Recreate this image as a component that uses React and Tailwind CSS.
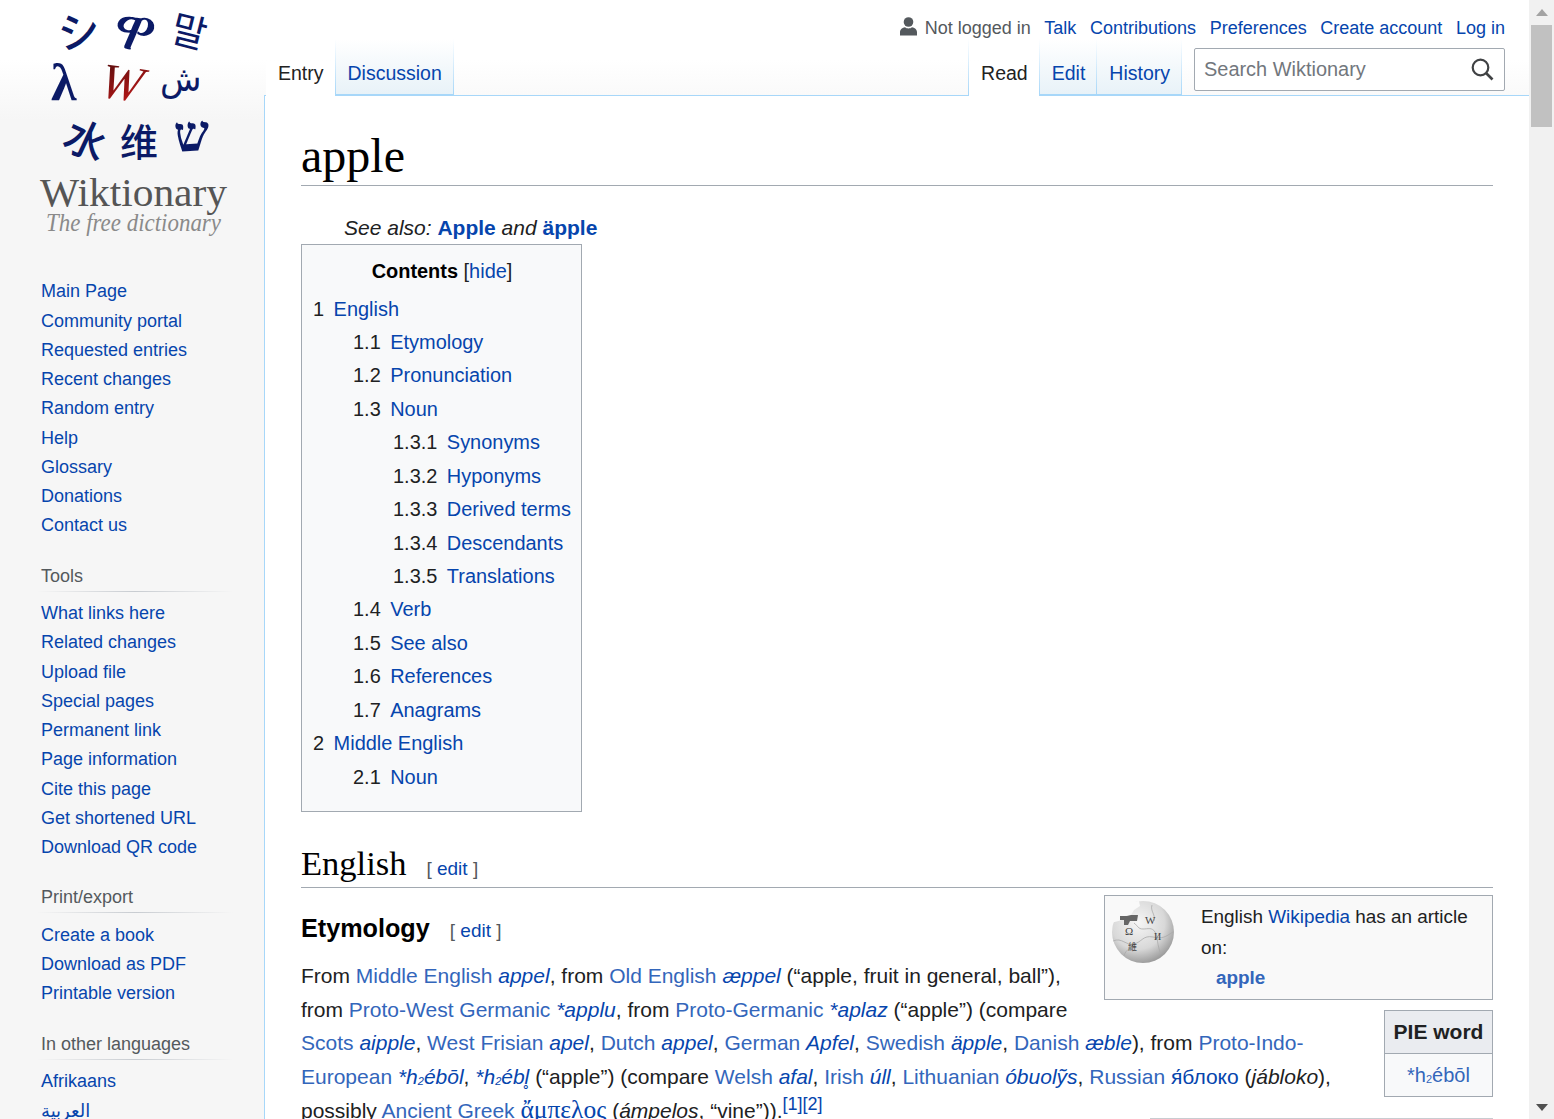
import React from "react";

const Portal = ({ items }) => (
  <ul>
    {items.map((t) => (
      <li key={t} className="h-[29.25px] leading-[29.25px] text-[18px] text-[#0645ad] whitespace-nowrap">{t}</li>
    ))}
  </ul>
);

const PortalHead = ({ children }) => (
  <div className="pt-[22px]">
    <div className="h-[26px] leading-[26px] text-[18px] text-[#54595d]">{children}</div>
    <div className="mt-[2px] mb-[7.5px] h-[1px] w-[196px] -ml-[4px] bg-gradient-to-r from-transparent via-[#c8ccd1] to-transparent" />
  </div>
);

const Logo = () => (
  <svg width="264" height="277.4" viewBox="0 0 264 277.4" className="block">
    <defs>
      <linearGradient id="w" x1="0" y1="0" x2="0.6" y2="1">
        <stop offset="0" stopColor="#4a0d0d" />
        <stop offset="1" stopColor="#c01818" />
      </linearGradient>
    </defs>
    <g fontFamily="'Noto Sans CJK JP','Noto Sans',sans-serif" fill="#0b1a66" fontWeight="700">
      <text x="58" y="47" fontSize="42" fontWeight="500" transform="rotate(-8 78 32)">シ</text>
      <text x="113" y="50" fontSize="62" fontFamily="'Noto Sans','DejaVu Sans',sans-serif" fontWeight="400" transform="rotate(15 135 30)">ዋ</text>
      <text x="172" y="46" fontSize="38" fontWeight="400" fontFamily="'Noto Sans CJK KR',sans-serif" transform="rotate(14 192 30)">말</text>
      <text x="51" y="100" fontSize="52" fontFamily="'Liberation Serif',serif" fontWeight="700">λ</text>
      <text x="160" y="91" fontSize="34" fontFamily="'DejaVu Sans',sans-serif" fontWeight="400">ش</text>
      <text x="67" y="155" fontSize="42" fontFamily="'Noto Sans CJK SC',sans-serif" fontWeight="500" transform="rotate(25 85 135)">水</text>
      <text x="120" y="156" fontSize="38" fontFamily="'Noto Sans CJK SC',sans-serif" fontWeight="500">维</text>
      <text x="174" y="151" fontSize="50" fontFamily="'Liberation Serif',serif" fontWeight="700" transform="rotate(-4 190 135)">ש</text>
    </g>
    <text x="107" y="100" fontSize="50" fontFamily="'Liberation Serif',serif" fontStyle="italic" fill="url(#w)" transform="rotate(8 125 82) skewX(-4)">W</text>
    <text x="133.5" y="206.5" textAnchor="middle" fontSize="40" fontFamily="'Liberation Serif',serif" fill="#555" textLength="187" lengthAdjust="spacingAndGlyphs">Wiktionary</text>
    <text x="133.5" y="231" textAnchor="middle" fontSize="26" fontFamily="'Liberation Serif',serif" fontStyle="italic" fill="#8a8a8a" textLength="175" lengthAdjust="spacingAndGlyphs">The free dictionary</text>
  </svg>
);

const Globe = () => (
  <svg width="66" height="62" viewBox="0 0 66 62" className="block -ml-[1px]">
    <defs>
      <radialGradient id="g" cx="42%" cy="35%" r="72%">
        <stop offset="0" stopColor="#f6f6f6" />
        <stop offset="0.6" stopColor="#d8d8d8" />
        <stop offset="1" stopColor="#8c8c8c" />
      </radialGradient>
    </defs>
    <circle cx="33" cy="31" r="31" fill="url(#g)" />
    <path d="M1 22L8 9l12-8 9-1 1 5-6 4-3 5-6 1-3 4z" fill="#f9f9f9" />
    <path d="M10 15h7l4-1h7l-1 6h-7l-2 4h-4v-5h-4z" fill="#666" />
    <g fill="none" stroke="#aaa" strokeWidth="0.8">
      <path d="M24 22c4 3 4 6 9 6s9-2 12 3 2 14 6 22" />
      <path d="M3 40c9-4 13 5 21 3s9-9 19-7 12 0 20-5" />
      <path d="M14 55c2-8 9-8 11-13M42 4c-2 6 4 10 2 16" />
    </g>
    <g fill="#444" fontFamily="'Liberation Serif',serif">
      <text x="15" y="34" fontSize="11">Ω</text>
      <text x="35" y="23" fontSize="11">W</text>
      <text x="44" y="39" fontSize="10">И</text>
      <text x="18" y="49" fontSize="9" fontFamily="'Noto Sans CJK SC',sans-serif">維</text>
    </g>
  </svg>
);

const Sep = () => <div className="w-[1px] h-[56px] bg-gradient-to-b from-transparent to-[#a7d7f9]" />;

const Tab = ({ children, active }) => (
  <div
    className={`pl-[12px] pr-[11px] pt-[17px] text-[19.5px] leading-[34px] whitespace-nowrap ${
      active
        ? "h-[57px] -mb-[1px] bg-gradient-to-b from-transparent from-[0%] to-white to-[40%] text-[#222]"
        : "h-[56px] bg-gradient-to-b from-white to-[#e8f2f8] text-[#0645ad] border-b border-b-[#a7d7f9]"
    }`}
  >
    {children}
  </div>
);

const tocRows = [
  [0, "1", "English"],
  [1, "1.1", "Etymology"],
  [1, "1.2", "Pronunciation"],
  [1, "1.3", "Noun"],
  [2, "1.3.1", "Synonyms"],
  [2, "1.3.2", "Hyponyms"],
  [2, "1.3.3", "Derived terms"],
  [2, "1.3.4", "Descendants"],
  [2, "1.3.5", "Translations"],
  [1, "1.4", "Verb"],
  [1, "1.5", "See also"],
  [1, "1.6", "References"],
  [1, "1.7", "Anagrams"],
  [0, "2", "Middle English"],
  [1, "2.1", "Noun"],
];
const indent = ["pl-0", "pl-[40px]", "pl-[80px]"];

const L = ({ children }) => <span className="text-[#3366bb]">{children}</span>;
const I = ({ children }) => <i className="text-[#0645ad]">{children}</i>;
const Sub2 = () => <span className="text-[11px] align-[-1px] leading-none">2</span>;

export default function App() {
  return (
    <div className="flex h-[1119px] w-[1554px] overflow-hidden font-['Liberation_Sans',Arial,sans-serif] text-[#202122] bg-[#f6f6f6]">
      <div className="relative flex flex-1 min-w-0 bg-gradient-to-b from-white from-[60px] to-[#f6f6f6] to-[120px] bg-no-repeat [background-size:100%_120px]">
        <aside className="w-[264px] shrink-0">
          <Logo />
          <div className="pl-[41px]">
            <Portal items={["Main Page","Community portal","Requested entries","Recent changes","Random entry","Help","Glossary","Donations","Contact us"]} />
            <PortalHead>Tools</PortalHead>
            <Portal items={["What links here","Related changes","Upload file","Special pages","Permanent link","Page information","Cite this page","Get shortened URL","Download QR code"]} />
            <PortalHead>Print/export</PortalHead>
            <Portal items={["Create a book","Download as PDF","Printable version"]} />
            <PortalHead>In other languages</PortalHead>
            <ul>
              <li className="h-[29.25px] leading-[29.25px] text-[18px] text-[#0645ad]">Afrikaans</li>
              <li className="h-[29.25px] leading-[29.25px] text-[18px] text-[#0645ad] font-['DejaVu_Sans',sans-serif]" dir="ltr">العربية</li>
            </ul>
          </div>
        </aside>

        <div className="flex-1 min-w-0 flex flex-col">
          <header className="h-[96px] shrink-0 flex flex-col border-b border-[#a7d7f9]">
            <div className="h-[40px] flex items-center justify-end gap-[13.6px] pr-[24px] pt-[16px] text-[18px] text-[#0645ad] whitespace-nowrap">
              <span className="flex items-center text-[#54595d]">
                <svg width="17" height="19" viewBox="0 0 17 19" className="mr-[8px] -mt-[4px]" fill="#54595d">
                  <circle cx="8.5" cy="5" r="4.8" />
                  <path d="M0 18.5v-3.5c0-2.500 2.500-4.500 5-4.800 1 .8 2 1.200 3.500 1.200s2.500-.4 3.500-1.200c2.500 .3 5 2.300 5 4.800v3.500z" />
                </svg>
                Not logged in
              </span>
              <span>Talk</span>
              <span>Contributions</span>
              <span>Preferences</span>
              <span>Create account</span>
              <span>Log in</span>
            </div>
            <div className="flex-1 flex justify-between items-end pl-[2px] min-h-0">
              <div className="flex">
                <Tab active>Entry</Tab>
                <Sep />
                <Tab>Discussion</Tab>
                <Sep />
              </div>
              <div className="flex items-end">
                <Sep />
                <Tab active>Read</Tab>
                <Sep />
                <Tab>Edit</Tab>
                <Sep />
                <Tab>History</Tab>
                <Sep />
                <div className="ml-[12px] mr-[24px] mb-[4px] w-[311px] h-[43px] bg-white border border-[#a2a9b1] rounded-[2px] flex items-center justify-between pl-[9px] pr-[10px]">
                  <span className="text-[19.95px] text-[#72777d]">Search Wiktionary</span>
                  <svg width="23" height="23" viewBox="0 0 23 23" fill="none" stroke="#404244" strokeWidth="2.2">
                    <circle cx="9.5" cy="9.5" r="7.8" />
                    <path d="M15 15l6.500 6.500" strokeWidth="2.6" />
                  </svg>
                </div>
              </div>
            </div>
          </header>

          <main className="flex-1 min-h-0 overflow-hidden bg-white pl-[37px] pr-[36px] text-[21px] leading-[33.6px]">
            <h1 className="font-['Liberation_Serif',serif] text-[48px] leading-[56px] text-black pt-[32px] h-[90px] border-b border-[#a2a9b1]">apple</h1>
            <div className="pl-[43px] mt-[25px] h-[33px] italic whitespace-nowrap">
              See also: <b className="not-italic text-[#0645ad]">Apple</b> and <b className="not-italic text-[#0645ad]">äpple</b>
            </div>
            <div className="w-[281px] h-[568px] bg-[#f8f9fa] border border-[#a2a9b1] text-[19.95px] pl-[11px] pt-[10px]">
              <div className="text-center h-[32px] leading-[32px] pr-[10px] mb-[5.5px]">
                <b className="text-black">Contents</b> <span>[<span className="text-[#0645ad]">hide</span>]</span>
              </div>
              <ul>
                {tocRows.map(([lvl, n, t]) => (
                  <li key={n} className={`h-[33.45px] leading-[33.45px] whitespace-nowrap ${indent[lvl]}`}>
                    <span className="pr-[9.5px]">{n}</span>
                    <span className="text-[#0645ad]">{t}</span>
                  </li>
                ))}
              </ul>
            </div>

            <h2 className="mt-[29px] h-[47px] border-b border-[#a2a9b1] font-['Liberation_Serif',serif] text-[34.5px] leading-[44px] text-black whitespace-nowrap">
              English
              <span className="ml-[20px] font-['Liberation_Sans',sans-serif] text-[19px] text-[#54595d]">[ <span className="text-[#0645ad]">edit</span> ]</span>
            </h2>

            <div className="float-right clear-right w-[389px] h-[105px] mt-[7px] bg-[#f9f9f9] border border-[#a2a9b1] flex pl-[6px] pt-[5px] text-[18.9px] leading-[31px]">
              <div className="w-[90px] shrink-0"><Globe /></div>
              <div>
                <div>English <span className="text-[#0645ad]">Wikipedia</span> has an article on:</div>
                <b className="block -mt-[1px] pl-[15px] text-[#3366bb]">apple</b>
              </div>
            </div>
            <div className="float-right clear-right w-[109px] h-[87px] mt-[10px] ml-[20px] border border-[#a2a9b1] text-center text-[21px]">
              <div className="h-[43px] leading-[41px] bg-[#eaecf0] border-b border-[#a2a9b1] font-bold">PIE word</div>
              <div className="h-[42px] leading-[43px] bg-[#f8f9fa] text-[#3366bb] text-[20px]">*h<Sub2 />ébōl</div>
            </div>
            <div className="float-right clear-right w-[343px] h-[100px] mt-[21px] border-t border-[#c8ccd1]" />

            <h3 className="pt-[22px] h-[65px] text-[25.2px] leading-[36px] font-bold text-black whitespace-nowrap">
              Etymology
              <span className="ml-[20px] font-normal text-[19px] text-[#54595d]">[ <span className="text-[#0645ad]">edit</span> ]</span>
            </h3>
            <p className="pt-[6px]">
              From <L>Middle English</L> <I>appel</I>, from <L>Old English</L> <I>æppel</I> (“apple, fruit in general, ball”), from <L>Proto-West Germanic</L> <I>*applu</I>, from <L>Proto-Germanic</L> <I>*aplaz</I> (“apple”) (compare <L>Scots</L> <I>aipple</I>, <L>West Frisian</L> <I>apel</I>, <L>Dutch</L> <I>appel</I>, <L>German</L> <I>Apfel</I>, <L>Swedish</L> <I>äpple</I>, <L>Danish</L> <I>æble</I>), from <L>Proto-Indo-European</L> <I>*h<Sub2 />ébōl</I>, <I>*h<Sub2 />ébl̥</I> (“apple”) (compare <L>Welsh</L> <I>afal</I>, <L>Irish</L> <I>úll</I>, <L>Lithuanian</L> <I>óbuolỹs</I>, <L>Russian</L> <span className="text-[#0645ad]">я́блоко</span> (<i>jábloko</i>), possibly <L>Ancient Greek</L> <span className="text-[#0645ad] text-[25.5px] font-['Liberation_Serif',serif]">ἄμπελος</span> (<i>ámpelos</i>, “vine”)).<sup className="text-[#0645ad] text-[18px] -top-[8px] relative align-baseline leading-none">[1][2]</sup>
            </p>
          </main>
        </div>
        <div className="absolute left-[264px] top-[96px] bottom-0 w-[1px] bg-[#a7d7f9]" />
      </div>

      <div className="w-[25px] shrink-0 bg-[#f1f1f1] flex flex-col items-center">
        <div className="h-[25px] w-full flex items-center justify-center">
          <svg width="12" height="8" viewBox="0 0 12 8"><path d="M6 0l6 7H0z" fill="#a3a3a3" /></svg>
        </div>
        <div className="w-[21px] h-[102px] bg-[#c1c1c1]" />
        <div className="flex-1" />
        <div className="h-[25px] w-full flex items-center justify-center">
          <svg width="12" height="8" viewBox="0 0 12 8"><path d="M0 1h12L6 8z" fill="#505050" /></svg>
        </div>
      </div>
    </div>
  );
}
